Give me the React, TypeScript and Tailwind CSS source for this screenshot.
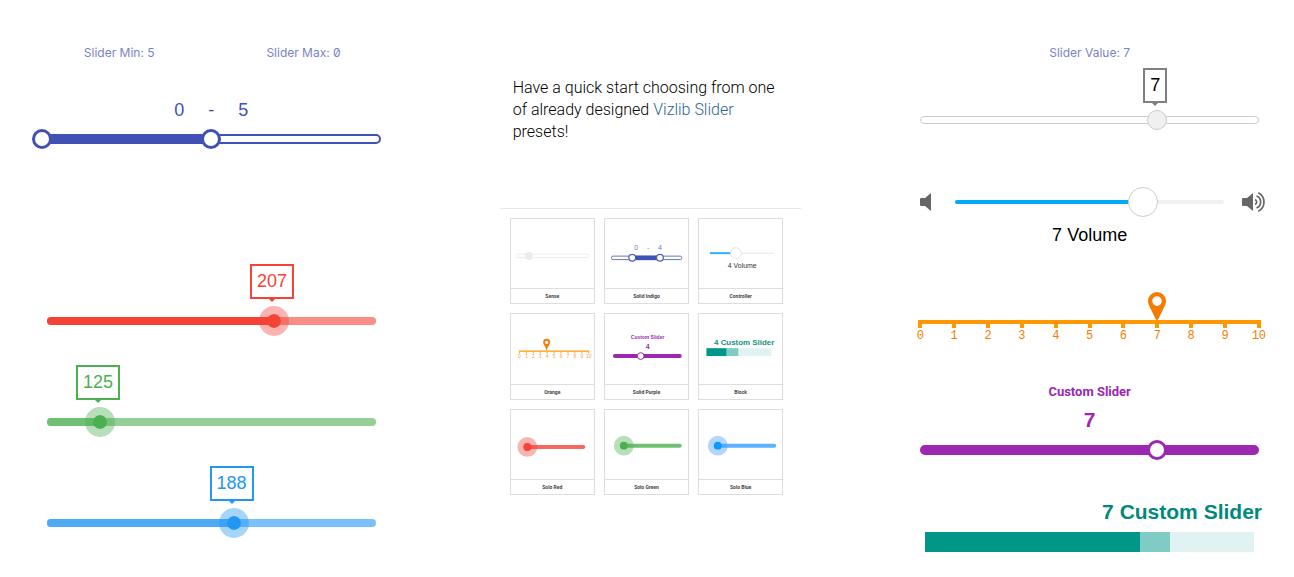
import { useState, type ReactNode } from "react";
import clsx from "clsx";

const percent = (value: number, min: number, max: number) => ((value - min) / (max - min)) * 100;

// the input is widened by one thumb so that the thumb's centre reaches both track ends
const rangeBase =
  "col-start-1 row-start-1 z-10 block appearance-none bg-transparent outline-none cursor-pointer [&::-webkit-slider-thumb]:appearance-none";

const roundThumb =
  "h-5 w-[calc(100%+20px)] -ml-[10px] [&::-webkit-slider-thumb]:size-5 [&::-webkit-slider-thumb]:rounded-full";

const wideThumb =
  "w-[calc(100%+30px)] -ml-[15px] [&::-webkit-slider-thumb]:w-[30px]";

interface SliderProps {
  label: string;
  value: number;
  onChange: (value: number) => void;
  min?: number;
  max?: number;
  trackClass: string;
  fillClass?: string;
  inputClass: string;
}

function Slider({ label, value, onChange, min = 0, max = 10, trackClass, fillClass, inputClass }: SliderProps) {
  return (
    <div className="grid grid-cols-1 items-center">
      <div className={clsx("col-start-1 row-start-1 overflow-hidden", trackClass)}>
        {fillClass && <div className={clsx("h-full", fillClass)} style={{ width: `${percent(value, min, max)}%` }} />}
      </div>
      <input
        type="range"
        aria-label={label}
        min={min}
        max={max}
        value={value}
        onChange={(e) => onChange(Number(e.target.value))}
        className={clsx(rangeBase, inputClass)}
      />
    </div>
  );
}

interface BubbleProps {
  left: number;
  className: string;
  arrowClass: string;
  children: ReactNode;
}

function Bubble({ left, className, arrowClass, children }: BubbleProps) {
  return (
    <div className="relative h-[42px]">
      <output
        className={clsx("absolute top-0 -ml-[2px] -translate-x-1/2 border-2 bg-white px-[5px] text-[18px] leading-[31px]", className)}
        style={{ left: `${left}%` }}
      >
        {children}
        <span className={clsx("absolute top-full left-1/2 mt-[2px] -ml-[3px] border-x-[3px] border-t-[3px] border-x-transparent", arrowClass)} />
      </output>
    </div>
  );
}

function RangeSlider() {
  const [range, setRange] = useState([0, 5]);
  const [low, high] = range;
  const thumb = clsx(
    rangeBase,
    roundThumb,
    "pointer-events-none [&::-webkit-slider-thumb]:pointer-events-auto [&::-webkit-slider-thumb]:border-[3px] [&::-webkit-slider-thumb]:border-[#3f51b5] [&::-webkit-slider-thumb]:bg-white"
  );

  return (
    <section>
      <div className="grid grid-cols-2 text-center font-[Inter,sans-serif] text-[12px] leading-[18px] slashed-zero text-[#7a83c8]">
        <p>Slider Min: {high}</p>
        <p>Slider Max: {low}</p>
      </div>
      <div className="mt-[38px] flex justify-center gap-6 text-[18px] leading-5 text-[#3f51b5]">
        <span>{low}</span>
        <span>-</span>
        <span>{high}</span>
      </div>
      <div className="mx-[15px] mt-[9px] grid grid-cols-1 items-center">
        <div className="col-start-1 row-start-1 h-[10px] overflow-hidden rounded-full border-2 border-[#3f51b5]">
          <div className="h-full bg-[#3f51b5]" style={{ marginLeft: `${low * 10}%`, width: `${(high - low) * 10}%` }} />
        </div>
        <input type="range" aria-label="Lower value" min={0} max={10} value={low} className={thumb}
          onChange={(e) => setRange([Math.min(Number(e.target.value), high), high])} />
        <input type="range" aria-label="Upper value" min={0} max={10} value={high} className={thumb}
          onChange={(e) => setRange([low, Math.max(Number(e.target.value), low)])} />
      </div>
    </section>
  );
}

const soloThemes = {
  red: {
    bubble: "border-[#f44336] text-[#f44336]",
    arrow: "border-t-[#f44336]",
    track: "bg-[#f98e86]",
    fill: "bg-[#f44336]",
    thumb: "[&::-webkit-slider-thumb]:bg-[#f44336] [&::-webkit-slider-thumb]:border-[#f44336]/40",
  },
  green: {
    bubble: "border-[#4caf50] text-[#4caf50]",
    arrow: "border-t-[#4caf50]",
    track: "bg-[#94cf96]",
    fill: "bg-[#70c074]",
    thumb: "[&::-webkit-slider-thumb]:bg-[#4caf50] [&::-webkit-slider-thumb]:border-[#4caf50]/40",
  },
  blue: {
    bubble: "border-[#2196f3] text-[#2196f3]",
    arrow: "border-t-[#2196f3]",
    track: "bg-[#7ac0fa]",
    fill: "bg-[#4dabf5]",
    thumb: "[&::-webkit-slider-thumb]:bg-[#2196f3] [&::-webkit-slider-thumb]:border-[#2196f3]/40",
  },
};

function SoloSlider({ theme, initial }: { theme: keyof typeof soloThemes; initial: number }) {
  const [value, setValue] = useState(initial);
  const t = soloThemes[theme];
  return (
    <div className="mx-5">
      <Bubble left={percent(value, 100, 255)} className={t.bubble} arrowClass={t.arrow}>{value}</Bubble>
      <Slider
        label={`Solo ${theme}`}
        min={100}
        max={255}
        value={value}
        onChange={setValue}
        trackClass={clsx("h-2 rounded-full", t.track)}
        fillClass={t.fill}
        inputClass={clsx(
          "h-[30px] [&::-webkit-slider-thumb]:h-[30px] [&::-webkit-slider-thumb]:rounded-full [&::-webkit-slider-thumb]:border-8 [&::-webkit-slider-thumb]:bg-clip-padding",
          wideThumb,
          t.thumb
        )}
      />
    </div>
  );
}

function Pin({ className }: { className?: string }) {
  return (
    <svg viewBox="0 0 18 28" className={className} fill="#f57c00">
      <path fillRule="evenodd" d="M9 0a9 9 0 0 0-9 9c0 2 .6 3.600 1.300 5L7.700 27.200Q9 28.800 10.300 27.200L16.700 14C17.400 12.600 18 11 18 9a9 9 0 0 0-9-9Zm0 4.300a4.800 4.800 0 1 1 0 9.600 4.800 4.800 0 0 1 0-9.600Z" />
    </svg>
  );
}

function SpeakerLow() {
  return (
    <svg viewBox="0 0 11 18" className="h-[18px] w-[11px] shrink-0" fill="#666">
      <path d="M1 5h4l6-5v18l-6-5H1q-1 0-1-1V6q0-1 1-1Z" />
    </svg>
  );
}

function SpeakerHigh() {
  return (
    <svg viewBox="0 0 24 20" className="h-5 w-6 shrink-0" fill="none" stroke="#666" strokeWidth="1.700">
      <path d="M1 6h4l6-5v18l-6-5H1q-1 0-1-1V7q0-1 1-1Z" fill="#666" stroke="none" />
      <path d="M13 7.500a2.700 2.700 0 0 1 0 5M14.500 4a6.400 6.400 0 0 1 0 12M16.300 .800a10.300 10.300 0 0 1 0 18.400" />
    </svg>
  );
}

function ScaleSlider({ value, onChange }: { value: number; onChange: (value: number) => void }) {
  return (
    <div className="relative mx-[15px] pt-7">
      <div className="absolute top-0 -ml-[9px]" style={{ left: `${value * 10}%` }}>
        <Pin className="h-7 w-[18px]" />
      </div>
      <div className="-mx-[2px] h-1 bg-[#ff9800]" />
      <div className="flex justify-between font-['Liberation_Mono',monospace] text-[12px] leading-4 text-[#f57c00]">
        {Array.from({ length: 11 }, (_, i) => (
          <div key={i} className="flex w-0 flex-col items-center">
            <span className="h-1 w-1 bg-[#ff9800]" />
            {i}
          </div>
        ))}
      </div>
      <input
        type="range"
        aria-label="Orange slider"
        min={0}
        max={10}
        value={value}
        onChange={(e) => onChange(Number(e.target.value))}
        className="absolute top-0 -left-2 h-9 w-[calc(100%+16px)] cursor-pointer opacity-0"
      />
    </div>
  );
}

// thumbnails share one 84 x 70 drawing area
const presets: { name: string; art: ReactNode }[] = [
  {
    name: "Sense",
    art: (
      <>
        <rect x="6" y="35.500" width="72" height="3.500" rx="1" fill="none" stroke="#ececec" />
        <circle cx="18" cy="37.300" r="4" fill="#ebebeb" />
      </>
    ),
  },
  {
    name: "Solid Indigo",
    art: (
      <>
        <g fill="#6f7cc8" fontSize="7" textAnchor="middle">
          <text x="31.500" y="31.500">0</text>
          <text x="43.500" y="31.500">-</text>
          <text x="55.500" y="31.500">4</text>
        </g>
        <rect x="6.500" y="37.500" width="71" height="3.500" rx="1.500" fill="#fff" stroke="#6572c3" />
        <rect x="28" y="37" width="28" height="4.500" fill="#3f51b5" />
        <circle cx="27.500" cy="39.200" r="3.400" fill="#fff" stroke="#4d5dba" strokeWidth="1.200" />
        <circle cx="55.500" cy="39.200" r="3.400" fill="#fff" stroke="#4d5dba" strokeWidth="1.200" />
      </>
    ),
  },
  {
    name: "Controller",
    art: (
      <>
        <path d="M11 34.500h65" stroke="#eee" strokeWidth="1.500" />
        <path d="M11 34.500h22" stroke="#2bb0f5" strokeWidth="2" />
        <circle cx="37.300" cy="34.500" r="5.500" fill="#fff" stroke="#ddd" strokeWidth=".800" />
        <text x="43.700" y="49" fontSize="7" textAnchor="middle" fill="#333">4 Volume</text>
      </>
    ),
  },
  {
    name: "Orange",
    art: (
      <>
        <path d="M36 25a3.500 3.500 0 0 0-3.500 3.500c0 2.500 2.500 4 3.500 8.500 1-4.500 3.500-6 3.500-8.500a3.500 3.500 0 0 0-3.500-3.500Z" fill="#f57c00" />
        <circle cx="36" cy="28.700" r="1.700" fill="#fff" />
        <path d="M8 37.500h71" stroke="#ff9800" strokeWidth="1.500" />
        {Array.from({ length: 11 }, (_, i) => (
          <g key={i}>
            <rect x={8 + i * 7} y="38" width="1" height="2" fill="#ffa726" />
            <text x={8.5 + i * 7} y="44" fontSize="5" textAnchor="middle" fill="#f9a04c">{i}</text>
          </g>
        ))}
      </>
    ),
  },
  {
    name: "Solid Purple",
    art: (
      <>
        <g fill="#9c27b0" fontWeight="bold" textAnchor="middle">
          <text x="43" y="25" fontSize="5">Custom Slider</text>
          <text x="43" y="35.500" fontSize="7">4</text>
        </g>
        <path d="M10 42.500h65.500" stroke="#9c27b0" strokeWidth="4" strokeLinecap="round" />
        <circle cx="36" cy="42.500" r="3.400" fill="#fff" stroke="#9c27b0" />
      </>
    ),
  },
  {
    name: "Block",
    art: (
      <>
        <text x="76" y="31.500" fontSize="8" fontWeight="bold" textAnchor="end" fill="#16917f">4 Custom Slider</text>
        <path d="M7.500 34.500H28v8H7.500Z" fill="#009688" />
        <path d="M28 34.500h12v8H28Z" fill="#80cbc4" />
        <path d="M40 34.500h33v8H40Z" fill="#e0f2f1" />
      </>
    ),
  },
  {
    name: "Solo Red",
    art: (
      <>
        <path d="M17 37.300h56" stroke="#f6695e" strokeWidth="4" strokeLinecap="round" />
        <circle cx="16.500" cy="37.300" r="10" fill="#f44336" fillOpacity=".4" />
        <circle cx="16.500" cy="37.300" r="4" fill="#f44336" />
      </>
    ),
  },
  {
    name: "Solo Green",
    art: (
      <>
        <path d="M19 36h56.500" stroke="#70c074" strokeWidth="4" strokeLinecap="round" />
        <circle cx="19" cy="36" r="10" fill="#4caf50" fillOpacity=".4" />
        <circle cx="19" cy="36" r="4" fill="#4caf50" />
      </>
    ),
  },
  {
    name: "Solo Blue",
    art: (
      <>
        <path d="M19 36h57" stroke="#5eb2ff" strokeWidth="4" strokeLinecap="round" />
        <circle cx="19" cy="36" r="10" fill="#4595ff" fillOpacity=".4" />
        <circle cx="19" cy="36" r="4" fill="#0a9dff" />
      </>
    ),
  },
];

export default function App() {
  const [value, setValue] = useState(7);

  return (
    <main className="grid grid-cols-[368fr_301fr_368fr] items-start gap-[104px] bg-white pr-5 pb-6 pl-[27px] font-['Liberation_Sans',Arial,sans-serif]">
      {/* Left column */}
      <div className="pt-11">
        <RangeSlider />
        <div className="mt-[115px] flex flex-col gap-[29px]">
          <SoloSlider theme="red" initial={207} />
          <SoloSlider theme="green" initial={125} />
          <SoloSlider theme="blue" initial={188} />
        </div>
      </div>

      {/* Intro and presets */}
      <div className="pt-[77px]">
        <p className="px-[13px] font-[Roboto,sans-serif] text-[16px] leading-[22px] font-light text-black">
          Have a quick start choosing from one of already designed{" "}
          <a href="#presets" className="text-[#2f6499]">Vizlib Slider</a> presets!
        </p>
        <div id="presets" className="mt-[65px] grid grid-cols-3 gap-[9px] border-t border-[#e8e8e8] pt-[9px] pr-[18px] pl-[10px]">
          {presets.map((preset) => (
            <figure key={preset.name} className="border border-[#ddd]">
              <svg viewBox="0 0 84 70" className="block w-full">{preset.art}</svg>
              <figcaption className="border-t border-[#ddd] text-center font-[Roboto,sans-serif] text-[5px] leading-[14px] font-bold text-[#444]">
                {preset.name}
              </figcaption>
            </figure>
          ))}
        </div>
      </div>

      {/* Right column */}
      <div className="pt-11">
        <p className="text-center font-[Inter,sans-serif] text-[12px] leading-[18px] slashed-zero text-[#7a83c8]">Slider Value: {value}</p>
        <div className="mx-[15px] mt-[6px]">
          <Bubble left={value * 10} className="border-[#808080] text-black" arrowClass="border-t-[#808080]">{value}</Bubble>
          <Slider
            label="Sense slider"
            value={value}
            onChange={setValue}
            trackClass="h-2 rounded-full border border-[#ccc]"
            inputClass={clsx(
              roundThumb,
              "[&::-webkit-slider-thumb]:border [&::-webkit-slider-thumb]:border-[#ccc] [&::-webkit-slider-thumb]:bg-[#f0f0f0]"
            )}
          />
        </div>

        <div className="mt-[57px] flex items-center pr-2 pl-[15px]">
          <SpeakerLow />
          <div className="mr-[18px] ml-6 flex-1">
            <Slider
              label="Volume"
              value={value}
              onChange={setValue}
              trackClass="h-1 rounded-full bg-[#f0f0f0]"
              fillClass="bg-[#03a9f4]"
              inputClass={clsx(
                "h-[30px] [&::-webkit-slider-thumb]:h-[30px] [&::-webkit-slider-thumb]:rounded-full [&::-webkit-slider-thumb]:border [&::-webkit-slider-thumb]:border-[#ccc] [&::-webkit-slider-thumb]:bg-white",
                wideThumb
              )}
            />
          </div>
          <SpeakerHigh />
        </div>
        <p className="mt-2 text-center text-[18px] leading-5">{value} Volume</p>

        <div className="mt-[47px]">
          <ScaleSlider value={value} onChange={setValue} />
        </div>

        <div className="mx-[15px] mt-10 text-center text-[#9c27b0]">
          <p className="font-[Roboto,sans-serif] text-[13px] leading-4 font-bold">Custom Slider</p>
          <p className="mt-[10px] mb-[10px] text-[21px] leading-5 font-bold">{value}</p>
          <Slider
            label="Purple slider"
            value={value}
            onChange={setValue}
            trackClass="h-[10px] rounded-full bg-[#9c27b0]"
            inputClass={clsx(
              roundThumb,
              "[&::-webkit-slider-thumb]:border-[3px] [&::-webkit-slider-thumb]:border-[#9c27b0] [&::-webkit-slider-thumb]:bg-white"
            )}
          />
        </div>

        <p className="mt-[42px] mr-3 text-right text-[21px] leading-5 font-bold text-[#00897b]">{value} Custom Slider</p>
        <div className="mx-5 mt-[10px]">
          <Slider
            label="Block slider"
            value={value}
            onChange={setValue}
            trackClass="h-5 bg-[#e0f2f1]"
            fillClass="bg-[#009688]"
            inputClass={clsx(
              "h-5 [&::-webkit-slider-thumb]:h-5 [&::-webkit-slider-thumb]:rounded-none [&::-webkit-slider-thumb]:bg-[#80cbc4]",
              wideThumb
            )}
          />
        </div>
      </div>
    </main>
  );
}
